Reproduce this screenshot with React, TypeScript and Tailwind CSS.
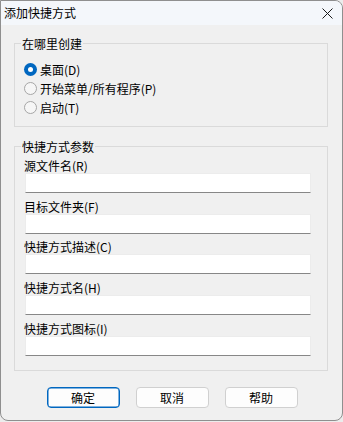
const font = {
  fontFamily: '"Noto Sans CJK SC", "Noto Sans", sans-serif',
};

function Radio({ label, checked }: { label: string; checked?: boolean }) {
  return (
    <div className="flex h-[19px] items-center">
      {checked ? (
        <span className="ml-[9px] flex h-[13px] w-[13px] items-center justify-center rounded-full bg-[#0067c0]">
          <span className="h-[5px] w-[5px] rounded-full bg-white" />
        </span>
      ) : (
        <span className="ml-[9px] h-[13px] w-[13px] rounded-full border border-[#a6a6a6] bg-[#f6f6f6]" />
      )}
      <span className="ml-[3px] text-[12px] leading-[15px] text-black">{label}</span>
    </div>
  );
}

function Field({ label, top }: { label: string; top: string }) {
  return (
    <div className={top}>
      <div className="h-[15px] pl-[9px] text-[12px] leading-[15px] text-black">{label}</div>
      <div className="ml-[10px] h-[20px] w-[286px] border border-[#ececec] border-b-[#878787] bg-white" />
    </div>
  );
}

function Group({ title, className, children }: { title: string; className: string; children: React.ReactNode }) {
  return (
    <div className={`w-[314px] border border-[#dadada] ${className}`}>
      <div className="-mt-[8px] ml-[6px] w-fit bg-[#f0f0f0] px-[1px] text-[12px] leading-[16px] text-black">
        {title}
      </div>
      {children}
    </div>
  );
}

function Btn({ label, primary }: { label: string; primary?: boolean }) {
  return (
    <button
      className={`flex h-[21px] w-[73px] items-center justify-center rounded-[4px] border bg-[#fdfdfd] text-[12px] leading-[15px] text-black ${
        primary ? "border-[#0067c0] shadow-[inset_0_0_0_0.5px_#0067c0]" : "border-[#d0d0d0]"
      }`}
    >
      {label}
    </button>
  );
}

export default function App() {
  return (
    <div className="h-[422px] w-[343px] bg-[#ececec]" style={font}>
      <div className="flex h-[421px] w-[343px] flex-col overflow-hidden rounded-tr-[8px] rounded-b-[8px] border border-[#8f8f8f] bg-[#f0f0f0]">
        <div className="flex h-[24px] shrink-0 items-center justify-between bg-[#f4f7fb] pl-[3px] pr-[9px]">
          <span className="text-[12px] leading-[16px] text-black">添加快捷方式</span>
          <svg width="11" height="11" viewBox="0 0 11 11" className="mt-[1px]">
            <path d="M0.5 0.5 L10.5 10.5 M10.5 0.5 L0.5 10.5" stroke="#1a1a1a" strokeWidth="1" />
          </svg>
        </div>
        <div className="flex flex-col pl-[13px]">
          <Group title="在哪里创建" className="mt-[18px] pb-[9px]">
            <div className="mt-[8px]">
              <Radio label="桌面(D)" checked />
              <Radio label="开始菜单/所有程序(P)" />
              <Radio label="启动(T)" />
            </div>
          </Group>
          <Group title="快捷方式参数" className="mt-[19px] pb-[14px]">
            <Field label="源文件名(R)" top="mt-[3px]" />
            <Field label="目标文件夹(F)" top="mt-[6px]" />
            <Field label="快捷方式描述(C)" top="mt-[5px]" />
            <Field label="快捷方式名(H)" top="mt-[6px]" />
            <Field label="快捷方式图标(I)" top="mt-[6px]" />
          </Group>
        </div>
        <div className="mt-[16px] flex justify-center gap-[16px] pl-[1px]">
          <Btn label="确定" primary />
          <Btn label="取消" />
          <Btn label="帮助" />
        </div>
      </div>
    </div>
  );
}
